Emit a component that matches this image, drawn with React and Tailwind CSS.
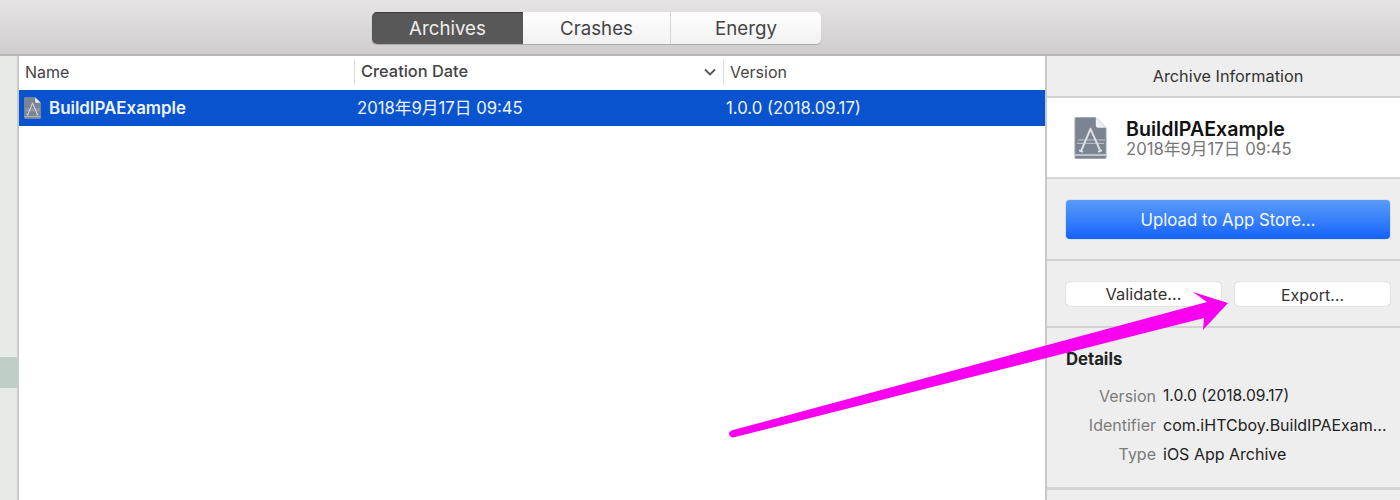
function ArchiveIcon({ className }) {
  return (
    <svg viewBox="0 0 34 44" className={className}>
      <path d="M2 1h20.500L33 11.500V42a1 1 0 0 1-1 1H2a1 1 0 0 1-1-1V2a1 1 0 0 1 1-1z" fill="#7c8491" stroke="#9aa0aa" strokeWidth="1" />
      <path d="M22.500 1v8a2.500 2.500 0 0 0 2.500 2.500h8z" fill="#eef1f5" />
      <path d="M1 39.500h32" stroke="#d3d7dc" strokeWidth="1.400" />
      <path d="M4 24h28M3 27.500h28" stroke="#c2c7ce" strokeWidth="1" fill="none" />
      <path d="M17 12.500 7.500 35M17 12.500 27 35M6 35l2.500 1M28 35l-2.500 1" stroke="#dde0e5" strokeWidth="2" fill="none" strokeLinecap="round" />
    </svg>
  );
}

function Segment({ label, active, last }) {
  return (
    <div
      className={`flex items-center justify-center pt-[2px] text-[18.700px] ${last ? "flex-1" : "w-[148px]"} ${
        active
          ? "w-[151px] bg-[#585858] text-[#eeeeee] shadow-[inset_0_1px_1px_#3f3f3f]"
          : "bg-gradient-to-b from-[#ffffff] to-[#f1f1f1] text-[#444444]"
      } ${!active && !last ? "border-r border-[#d4d4d4]" : ""}`}
    >
      {label}
    </div>
  );
}

function DetailRow({ label, value, valueClass }) {
  return (
    <div className="flex h-[29px] items-center gap-[7px]">
      <div className="w-[90px] whitespace-nowrap text-right text-[#7b7b7b]">{label}</div>
      <div className={`whitespace-nowrap text-[#222222] ${valueClass || ""}`}>{value}</div>
    </div>
  );
}

export default function App() {
  return (
    <div className="relative flex h-[500px] w-[1400px] flex-col overflow-hidden bg-white font-['Inter','Noto_Sans_CJK_JP',sans-serif] text-[16px]">
      <div className="flex h-[56px] shrink-0 items-start border-b-2 border-[#b9b7b8] bg-gradient-to-b from-[#e6e4e5] to-[#cfcdce] pl-[372px] pt-[12px]">
        <div className="flex h-[32px] w-[449px] overflow-hidden rounded-[5px] shadow-[0_1px_1px_#a8a8a8]">
          <Segment label="Archives" active />
          <Segment label="Crashes" />
          <Segment label="Energy" last />
        </div>
      </div>

      <div className="flex min-h-0 flex-1">
        <div className="flex w-[19px] shrink-0 flex-col border-r-2 border-[#c9cbca] bg-[#e6ebe8]">
          <div className="mt-[301px] h-[31px] bg-[#bfcfc8]" />
        </div>

        <div className="min-w-0 flex-1 bg-white">
          <div className="flex h-[33px] items-center pb-[2px] text-[#444444]">
            <div className="w-[335px] pl-[6px]">Name</div>
            <div className="flex h-[26px] w-[369px] items-center justify-between border-l border-[#dddddd] pl-[6px] pr-[7px] text-[16.400px] font-medium">
              <span>Creation Date</span>
              <svg width="12" height="8" viewBox="0 0 12 8" fill="none" stroke="#555555" strokeWidth="1.800">
                <path d="M1 1.500 6 6.500 11 1.500" />
              </svg>
            </div>
            <div className="flex h-[26px] flex-1 items-center border-l border-[#dddddd] pl-[6px]">Version</div>
          </div>
          <div className="mt-[1px] flex h-[36px] items-center bg-[#0a53cf] pt-[1px] text-[16.700px] text-[#eef3fc]">
            <div className="flex w-[338px] items-center gap-[8px] pl-[5px]">
              <ArchiveIcon className="h-[22px] w-[17px]" />
              <span className="text-[16.900px] font-semibold">BuildIPAExample</span>
            </div>
            <div className="w-[369px]">2018年9月17日 09:45</div>
            <div>1.0.0 (2018.09.17)</div>
          </div>
        </div>

        <div className="flex w-[355px] shrink-0 flex-col border-l-2 border-[#c8c8c8] bg-[#eeeeee]">
          <div className="flex h-[42px] shrink-0 items-center justify-center border-b-2 border-[#d2d2d2] pl-[9px] pt-[1px] text-[16.300px] text-[#333333]">
            Archive Information
          </div>
          <div className="flex h-[81px] shrink-0 items-center gap-[19px] border-b-2 border-[#d5d5d5] bg-white pl-[27px]">
            <ArchiveIcon className="h-[44px] w-[33px]" />
            <div className="pt-[2px]">
              <div className="text-[19.600px] font-semibold leading-[20px] text-[#111111]">BuildIPAExample</div>
              <div className="text-[16.700px] leading-[20px] text-[#777777]">2018年9月17日 09:45</div>
            </div>
          </div>
          <div className="flex h-[82px] shrink-0 items-center border-b-2 border-[#d2d2d2] pl-[19px]">
            <div className="flex h-[39px] w-[324px] items-center justify-center rounded-[4px] bg-gradient-to-b from-[#5a9bfa] to-[#1261fb] pt-[3px] text-[16.800px] text-[#f4f8ff] shadow-[0_0_1px_#2a66c8]">
              Upload to App Store…
            </div>
          </div>
          <div className="flex h-[67px] shrink-0 items-center gap-[14px] border-b-2 border-[#d2d2d2] pl-[19px] pt-[1px]">
            <div className="flex h-[24px] w-[155px] items-center justify-center rounded-[4px] bg-white pt-[1px] text-[16.400px] text-[#333333] shadow-[0_0_1px_#8f8f8f]">Validate…</div>
            <div className="flex h-[24px] w-[155px] items-center justify-center rounded-[4px] bg-white pt-[1px] text-[#333333] shadow-[0_0_1px_#8f8f8f]">Export…</div>
          </div>
          <div className="h-[162px] shrink-0 border-b-[3px] border-[#d5d5d5] pl-[19px] pt-[19px]">
            <div className="mb-[9px] text-[16.700px] font-bold text-[#222222]">Details</div>
            <DetailRow label="Version" value="1.0.0 (2018.09.17)" valueClass="text-[15.600px]" />
            <DetailRow label="Identifier" value="com.iHTCboy.BuildIPAExam…" />
            <DetailRow label="Type" value="iOS App Archive" />
          </div>
        </div>
      </div>

      <svg className="pointer-events-none absolute left-0 top-0" width="1400" height="500" viewBox="0 0 1400 500">
        <path
          d="M729 433.500Q729 431.500 733 430L1207 302L1193 292L1228 303L1203 330L1204 318L733 437.500Q729 437 729 433.500Z"
          fill="#fa00f0"
        />
      </svg>
    </div>
  );
}
